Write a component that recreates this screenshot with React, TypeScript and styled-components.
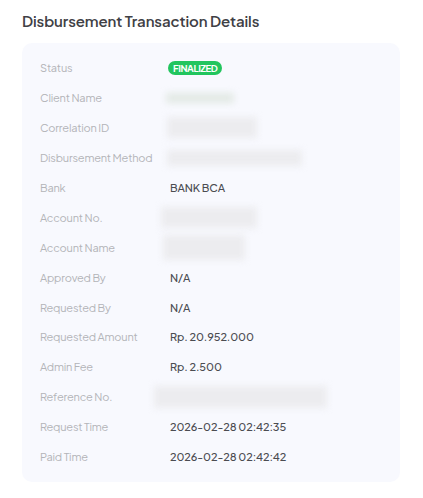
import * as React from "react";
import styled, { createGlobalStyle } from "styled-components";

const GlobalStyle = createGlobalStyle`
  body {
    margin: 0;
    background: #ffffff;
    font-family: "Plus Jakarta Sans", Inter, "Noto Sans", sans-serif;
  }
`;

type Blur = { width: number; height: number; shift: number; tint?: string };

type Row = {
  label: string;
  value?: string;
  badge?: string;
  blur?: Blur;
};

const rows: Row[] = [
  { label: "Status", badge: "FINALIZED" },
  { label: "Client Name", blur: { width: 68, height: 10, shift: -4, tint: "#e2e9e4" } },
  { label: "Correlation ID", blur: { width: 90, height: 21, shift: -3 } },
  { label: "Disbursement Method", blur: { width: 135, height: 16, shift: -3 } },
  { label: "Bank", value: "BANK BCA" },
  { label: "Account No.", blur: { width: 96, height: 21, shift: -9 } },
  { label: "Account Name", blur: { width: 82, height: 25, shift: -7 } },
  { label: "Approved By", value: "N/A" },
  { label: "Requested By", value: "N/A" },
  { label: "Requested Amount", value: "Rp. 20.952.000" },
  { label: "Admin Fee", value: "Rp. 2.500" },
  { label: "Reference No.", blur: { width: 173, height: 22, shift: -16 } },
  { label: "Request Time", value: "2026-02-28 02:42:35" },
  { label: "Paid Time", value: "2026-02-28 02:42:42" },
];

const App: React.FC = () => {
  return (
    <>
      <GlobalStyle />
      <Page>
        <Title>Disbursement Transaction Details</Title>
        <Card>
          {rows.map((row) => (
            <DetailRow key={row.label}>
              <Label>{row.label}</Label>
              <Value>
                {row.badge && <Badge>{row.badge}</Badge>}
                {row.value}
                {row.blur && (
                  <Redacted
                    $w={row.blur.width}
                    $h={row.blur.height}
                    $shift={row.blur.shift}
                    $tint={row.blur.tint || "#ececef"}
                  />
                )}
              </Value>
            </DetailRow>
          ))}
        </Card>
      </Page>
    </>
  );
};

const Page = styled.div`
  padding: 12px 23px 15px 22px;
  width: 378px;
`;

const Title = styled.h2`
  margin: 0 0 14px 0;
  font-size: 15px;
  font-weight: 600;
  color: #404045;
  letter-spacing: -0.1px;
  line-height: 17px;
`;

const Card = styled.div`
  background: #f8f9fe;
  border-radius: 10px;
  padding: 10px 18px 11px 18px;
  display: flex;
  flex-direction: column;
`;

const DetailRow = styled.div`
  display: grid;
  grid-template-columns: 130px 1fr;
  align-items: center;
  height: 29.9px;
`;

const Label = styled.span`
  font-size: 11px;
  color: #b3b4b8;
  letter-spacing: -0.2px;
`;

const Value = styled.span`
  display: flex;
  align-items: center;
  font-size: 11px;
  font-weight: 500;
  color: #4b4c51;
  letter-spacing: -0.1px;
`;

const Badge = styled.span`
  display: inline-flex;
  align-items: center;
  height: 14px;
  padding: 0 5px;
  margin-left: -2px;
  border-radius: 8px;
  background: #22c55e;
  color: #ffffff;
  font-size: 9.5px;
  font-weight: 700;
  letter-spacing: -0.4px;
`;

const Redacted = styled.span<{ $w: number; $h: number; $shift: number; $tint: string }>`
  display: block;
  width: ${(p) => p.$w}px;
  height: ${(p) => p.$h}px;
  margin-left: ${(p) => p.$shift}px;
  background: ${(p) => p.$tint};
  filter: blur(3.5px);
`;

export default App;
